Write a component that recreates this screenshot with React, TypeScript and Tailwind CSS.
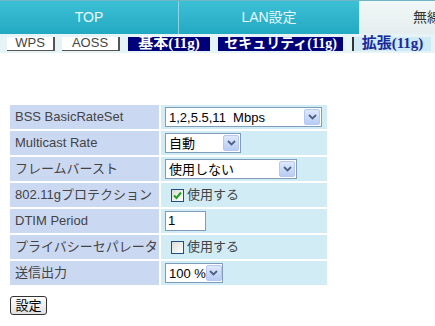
import React from 'react';

const FONT = { fontFamily: '"Liberation Sans", "Noto Sans CJK JP", sans-serif' };
const MINCHO = { fontFamily: '"Liberation Serif", "Noto Sans CJK JP", serif' };

function Arrow() {
  return (
    <span className="flex h-[16px] w-[16px] shrink-0 items-center justify-center rounded-[2px] border border-[#b7c8f0] bg-gradient-to-b from-[#dfe8fc] to-[#b9ccf5]">
      <svg width="9" height="6" viewBox="0 0 9 6">
        <path d="M1 1 L4.5 4.5 L8 1" fill="none" stroke="#4d6185" strokeWidth="1.8" />
      </svg>
    </span>
  );
}

function Select({ value, width }: { value: string; width: string }) {
  return (
    <div className={`flex h-[20px] items-center justify-between border border-[#7f9db9] bg-white pl-[3px] pr-[1px] ${width}`}>
      <span className="whitespace-pre text-[13px] leading-none text-black">{value}</span>
      <Arrow />
    </div>
  );
}

function Check({ checked }: { checked: boolean }) {
  return (
    <div className="flex items-center gap-[3px] pl-[6px]">
      <span className="flex h-[13px] w-[13px] items-center justify-center border border-[#1c5180] bg-gradient-to-br from-[#dcdcd6] to-white">
        {checked && (
          <svg width="9" height="9" viewBox="0 0 9 9">
            <path d="M1 4.5 L3.5 7 L8 1.5" fill="none" stroke="#21a121" strokeWidth="2" />
          </svg>
        )}
      </span>
      <span className="text-[13px] text-[#444]">使用する</span>
    </div>
  );
}

const ROWS: { label: string; control: React.ReactNode }[] = [
  { label: 'BSS BasicRateSet', control: <Select value="1,2,5.5,11  Mbps" width="w-[157px]" /> },
  { label: 'Multicast Rate', control: <Select value="自動" width="w-[76px]" /> },
  { label: 'フレームバースト', control: <Select value="使用しない" width="w-[132px]" /> },
  { label: '802.11gプロテクション', control: <Check checked /> },
  {
    label: 'DTIM Period',
    control: (
      <div className="flex h-[20px] w-[41px] items-center border border-[#7f9db9] bg-white pl-[2px] text-[13px] text-black">
        1
      </div>
    ),
  },
  { label: 'プライバシーセパレータ', control: <Check checked={false} /> },
  { label: '送信出力', control: <Select value="100 %" width="w-[58px]" /> },
];

export default function App() {
  return (
    <div className="h-[326px] w-[435px] overflow-hidden bg-white" style={FONT}>
      <div className="flex h-[34px] border-t border-[#6fb4c4]">
        <div className="flex w-[179px] shrink-0 items-center justify-center border-r border-[#8fd6e2] bg-gradient-to-b from-[#3cc0d6] to-[#22a9c2] text-[14px] text-[#e9f8fb]">
          TOP
        </div>
        <div className="flex w-[180px] shrink-0 items-center justify-center bg-gradient-to-b from-[#3cc0d6] to-[#22a9c2] text-[14px] text-[#e9f8fb]">
          LAN設定
        </div>
        <div className="flex min-w-0 flex-1 items-center overflow-hidden bg-gradient-to-b from-[#f2f7f7] to-[#e4eeee] pl-[54px] text-[14px] whitespace-nowrap text-[#333]">
          無線設定
        </div>
      </div>
      <div className="flex h-[19px] items-center bg-[#e6f3f7] pl-[7px] text-[13px]">
        <div className="flex h-[14px] w-[48px] items-center justify-center border-r-2 border-b border-[#555] bg-white text-[#444]">
          WPS
        </div>
        <div className="ml-[7px] flex h-[14px] w-[58px] items-center justify-center border-r-2 border-b border-[#555] bg-white text-[#444]">
          AOSS
        </div>
        <div className="ml-[8px] flex h-[14px] w-[82px] items-center justify-center bg-[#00007a] text-[15px] font-bold leading-none text-white" style={MINCHO}>
          基本(11g)
        </div>
        <div className="ml-[8px] flex h-[14px] w-[125px] items-center justify-center whitespace-nowrap bg-[#00007a] text-[14px] font-bold leading-none text-white" style={MINCHO}>
          セキュリティ(11g)
        </div>
        <div className="ml-[9px] flex h-[14px] w-[79px] items-center justify-center border-l-2 border-[#333] bg-[#cfeaf7] text-[15px] font-bold leading-none text-[#1a2a9a]" style={MINCHO}>
          拡張(11g)
        </div>
      </div>
      <div className="ml-[10px] mt-[52px] grid w-[318px] grid-cols-[149px_166px] gap-[2px]">
        {ROWS.map((r) => (
          <React.Fragment key={r.label}>
            <div className="flex h-[24px] items-center bg-[#cbd8f2] pl-[5px] text-[13px] whitespace-nowrap text-[#444]">
              {r.label}
            </div>
            <div className="flex h-[24px] items-center bg-[#d2ecf5] pl-[4px]">{r.control}</div>
          </React.Fragment>
        ))}
      </div>
      <button className="ml-[10px] mt-[11px] h-[19px] w-[37px] rounded-[3px] border border-[#333] bg-gradient-to-b from-white to-[#e0e0e0] text-[13px] leading-none text-black">
        設定
      </button>
    </div>
  );
}
